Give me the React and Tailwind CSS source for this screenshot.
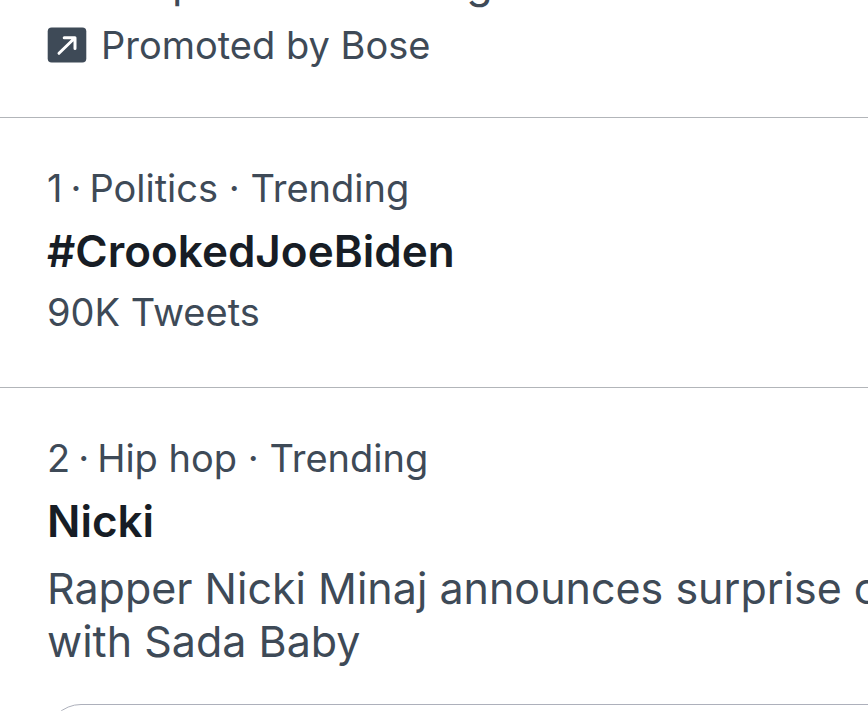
const trends = [
  {
    rank: 1,
    category: "Politics",
    title: "#CrookedJoeBiden",
    count: "90K Tweets",
  },
  {
    rank: 2,
    category: "Hip hop",
    title: "Nicki",
    description: ["Rapper Nicki Minaj announces surprise collab", "with Sada Baby"],
  },
];

// Rounded badge with the outbound arrow
const PromotedIcon = () => (
  <svg
    viewBox="0 0 40 36"
    className="h-9 w-10 shrink-0"
    fill="none"
    aria-hidden="true"
  >
    <rect x="0.7" y="0.4" width="38.6" height="35.2" rx="4" fill="#3e4a57" />
    <path
      d="M12 26.3 L27.5 11.2 M17.2 10.7 H28 V21.5"
      stroke="#fff"
      strokeWidth="3"
      strokeLinecap="round"
      strokeLinejoin="round"
    />
  </svg>
);

const PromotedTrend = () => (
  <article className="border-b border-[#b2b5b9] px-[47px] pb-[49px]">
    <p className="text-[43px] leading-[53px] whitespace-nowrap">
      A sleep set for resting
    </p>
    <div className="mt-[13px] flex items-center gap-3.5 text-[38px] leading-[46px]">
      <PromotedIcon />
      <span>Promoted by Bose</span>
    </div>
  </article>
);

const Trend = ({ trend }) => (
  <article className="border-b border-[#b2b5b9] px-[47px] pt-[47px] pb-[52px]">
    <div className="flex gap-2 text-[38px] leading-[46px] whitespace-nowrap">
      <span>{trend.rank}</span>
      <span>·</span>
      <span>{trend.category} · Trending</span>
    </div>
    <h2 className="mt-[9px] text-[44px] leading-[62px] font-semibold text-[#171d25]">
      {trend.title}
    </h2>
    {trend.count && (
      <p className="mt-[7px] text-[38px] leading-[46px]">{trend.count}</p>
    )}
    {trend.description && (
      <p className="mt-2.5 text-[43px] leading-[53px] whitespace-nowrap">
        {trend.description.map((line) => (
          <span key={line} className="block">
            {line}
          </span>
        ))}
      </p>
    )}
    {trend.description && (
      <button
        type="button"
        aria-label={`More about ${trend.title}`}
        className="mt-9 block h-[68px] w-full min-w-[900px] rounded-full border border-[#adb0bb]"
      />
    )}
  </article>
);

export default function App() {
  return (
    <main className="h-screen overflow-hidden bg-white font-['Inter',sans-serif] text-[#3e4a57]">
      <div className="-mt-11">
        <PromotedTrend />
        {trends.map((trend) => (
          <Trend key={trend.rank} trend={trend} />
        ))}
      </div>
    </main>
  );
}
